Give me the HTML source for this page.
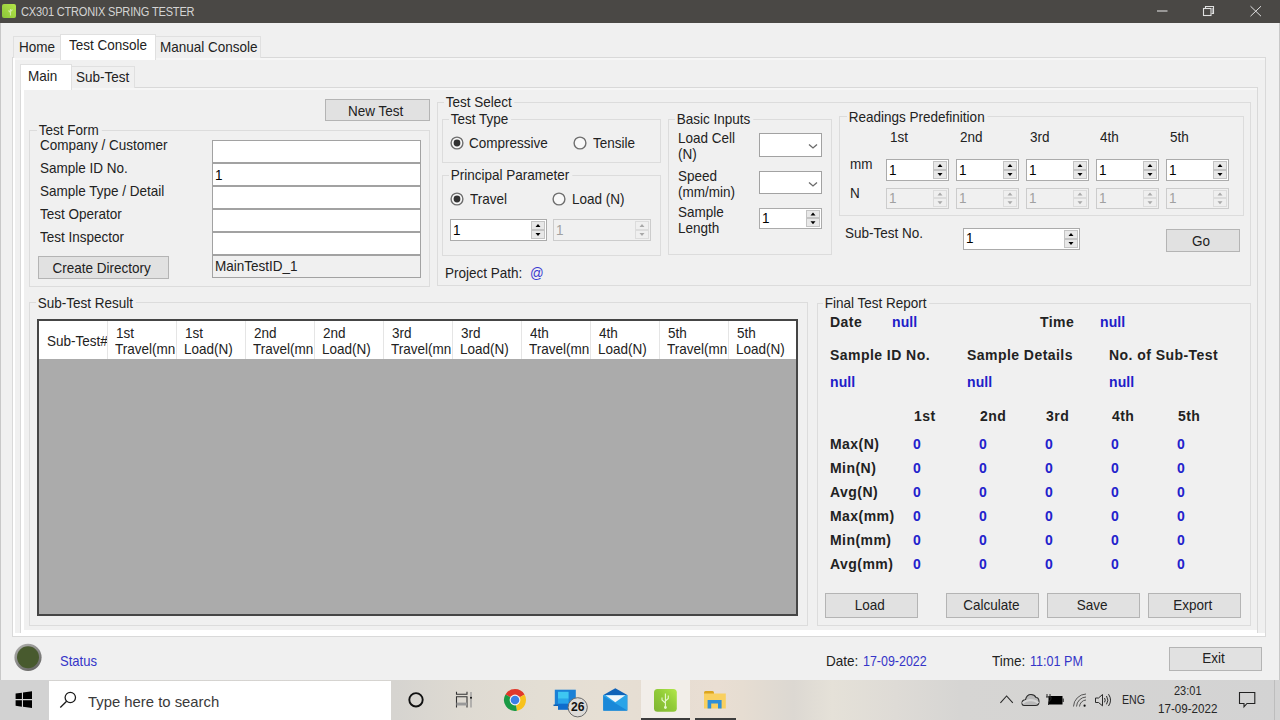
<!DOCTYPE html><html><head><meta charset="utf-8"><style>
html,body{margin:0;padding:0;width:1280px;height:720px;overflow:hidden;background:#f0f0f0;position:relative;font-family:"Liberation Sans",sans-serif}
.t{position:absolute;white-space:pre}
.b{position:absolute}
.grp{border:1px solid #dcdcdc;box-sizing:border-box}
.btn{background:#e1e1e1;border:1px solid #b4b4b4;box-sizing:border-box;text-align:center;color:#222222;font-family:"Liberation Sans",sans-serif}
</style></head><body>

<div class="b" style="left:0px;top:0px;width:1280px;height:23px;background:#4a4845"></div>
<svg class="b" style="left:2px;top:4px" width="15" height="15"><defs><linearGradient id="tg" x1="0" y1="1" x2="1" y2="0"><stop offset="0" stop-color="#8cc43a"/><stop offset="1" stop-color="#b4e648"/></linearGradient></defs><rect x="0" y="0" width="14" height="14" rx="2" fill="url(#tg)"/><path d="M8.5 11.5 V5 M8.5 8.5 L6.5 6.5 M8.5 7.5 L10.5 5.5" stroke="#cfeaa0" stroke-width="1.1" fill="none"/></svg>
<div class="t" style="left:21px;top:5.94px;font-size:12px;line-height:13.8px;color:#d4d4d4;font-weight:400;font-family:'Liberation Sans',sans-serif;letter-spacing:-0.2px;transform:scaleX(0.92);transform-origin:0 0;">CX301 CTRONIX SPRING TESTER</div>
<svg class="b" style="left:1150px;top:0" width="130" height="23"><path d="M7 11 H17.5" stroke="#cfcfcf" stroke-width="1.2"/><rect x="53.5" y="8.5" width="7.5" height="7" fill="none" stroke="#e0e0e0" stroke-width="1.1"/><rect x="61.5" y="8" width="1.8" height="6" fill="#9a9a9a"/><path d="M55.5 8.5 V6.5 H63.5 V13.5 H61.5" fill="none" stroke="#e0e0e0" stroke-width="1.1"/><path d="M100.5 6.2 L111 16.2 M111 6.2 L100.5 16.2" stroke="#e0e0e0" stroke-width="1"/></svg>
<div class="b" style="left:0px;top:23px;width:1px;height:657px;background:#c8c8c8"></div>
<div class="b" style="left:1279px;top:23px;width:1px;height:657px;background:#c8c8c8"></div>
<div class="b" style="left:12px;top:57px;width:1254px;height:580px;border:1px solid #d9d9d9;background:#f0f0f0;box-sizing:border-box"></div>
<div class="b" style="left:13px;top:58px;width:2px;height:577px;background:#fff"></div>
<div class="b" style="left:15px;top:58px;width:1250px;height:2px;background:#f6f6f6"></div>
<div class="b" style="left:13px;top:633px;width:1252px;height:3px;background:#fff"></div>
<div class="b" style="left:13px;top:36px;width:48px;height:22px;background:#f0f0f0;border:1px solid #e0e0e0;border-bottom:none;box-sizing:border-box"></div>
<div class="b" style="left:155px;top:36px;width:106px;height:22px;background:#f0f0f0;border:1px solid #e0e0e0;border-bottom:none;box-sizing:border-box"></div>
<div class="b" style="left:60px;top:34px;width:96px;height:26px;background:#fff;border:1px solid #e0e0e0;border-bottom:none;box-sizing:border-box"></div>
<div class="t" style="left:19px;top:38.18px;font-size:15px;line-height:17.25px;color:#222222;font-weight:400;font-family:'Liberation Sans',sans-serif;transform:scaleX(0.9);transform-origin:0 0;">Home</div>
<div class="t" style="left:69px;top:36.18px;font-size:15px;line-height:17.25px;color:#222222;font-weight:400;font-family:'Liberation Sans',sans-serif;transform:scaleX(0.9);transform-origin:0 0;">Test Console</div>
<div class="t" style="left:160px;top:38.18px;font-size:15px;line-height:17.25px;color:#222222;font-weight:400;font-family:'Liberation Sans',sans-serif;transform:scaleX(0.9);transform-origin:0 0;">Manual Console</div>
<div class="b" style="left:20px;top:87px;width:1px;height:546px;background:#d9d9d9"></div>
<div class="b" style="left:20px;top:87px;width:1238px;height:1px;background:#d9d9d9"></div>
<div class="b" style="left:1257px;top:87px;width:1px;height:546px;background:#d9d9d9"></div>
<div class="b" style="left:21px;top:88px;width:3px;height:545px;background:#fff"></div>
<div class="b" style="left:24px;top:88px;width:1233px;height:2px;background:#f6f6f6"></div>
<div class="b" style="left:21px;top:630px;width:1236px;height:3px;background:#fff"></div>
<div class="b" style="left:71px;top:66px;width:64px;height:22px;background:#f0f0f0;border:1px solid #e0e0e0;border-bottom:none;box-sizing:border-box"></div>
<div class="b" style="left:20px;top:64px;width:52px;height:26px;background:#fff;border:1px solid #e0e0e0;border-bottom:none;box-sizing:border-box"></div>
<div class="t" style="left:28px;top:66.68px;font-size:15px;line-height:17.25px;color:#222222;font-weight:400;font-family:'Liberation Sans',sans-serif;transform:scaleX(0.9);transform-origin:0 0;">Main</div>
<div class="t" style="left:76px;top:68.18px;font-size:15px;line-height:17.25px;color:#222222;font-weight:400;font-family:'Liberation Sans',sans-serif;transform:scaleX(0.9);transform-origin:0 0;">Sub-Test</div>
<div class="b btn" style="left:325px;top:99px;width:105px;height:22px;"></div>
<div class="t" style="left:323.5px;top:101.68px;width:105px;text-align:center;font-size:15px;line-height:17.25px;color:#222222"><span style="display:inline-block;transform:scaleX(0.9)">New Test</span></div>
<div class="b grp" style="left:29px;top:130px;width:401px;height:157px;"></div>
<div class="t" style="left:37px;top:121.18px;font-size:15px;line-height:17.25px;padding:0 3px 0 2px;background:#f0f0f0;color:#222222;transform:scaleX(0.9);transform-origin:0 0">Test Form</div>
<div class="t" style="left:40px;top:136.18px;font-size:15px;line-height:17.25px;color:#222222;font-weight:400;font-family:'Liberation Sans',sans-serif;transform:scaleX(0.9);transform-origin:0 0;">Company / Customer</div>
<div class="t" style="left:40px;top:159.18px;font-size:15px;line-height:17.25px;color:#222222;font-weight:400;font-family:'Liberation Sans',sans-serif;transform:scaleX(0.9);transform-origin:0 0;">Sample ID No.</div>
<div class="t" style="left:40px;top:182.18px;font-size:15px;line-height:17.25px;color:#222222;font-weight:400;font-family:'Liberation Sans',sans-serif;transform:scaleX(0.9);transform-origin:0 0;">Sample Type / Detail</div>
<div class="t" style="left:40px;top:205.18px;font-size:15px;line-height:17.25px;color:#222222;font-weight:400;font-family:'Liberation Sans',sans-serif;transform:scaleX(0.9);transform-origin:0 0;">Test Operator</div>
<div class="t" style="left:40px;top:228.18px;font-size:15px;line-height:17.25px;color:#222222;font-weight:400;font-family:'Liberation Sans',sans-serif;transform:scaleX(0.9);transform-origin:0 0;">Test Inspector</div>
<div class="b" style="left:212px;top:140px;width:209px;height:23px;background:#fff;border:1px solid #a2a2a2;box-sizing:border-box"></div>
<div class="b" style="left:212px;top:163px;width:209px;height:23px;background:#fff;border:1px solid #a2a2a2;box-sizing:border-box"></div>
<div class="t" style="left:215px;top:166.18px;font-size:15px;line-height:17.25px;color:#000;font-weight:400;font-family:'Liberation Sans',sans-serif;transform:scaleX(0.9);transform-origin:0 0;">1</div>
<div class="b" style="left:212px;top:186px;width:209px;height:23px;background:#fff;border:1px solid #a2a2a2;box-sizing:border-box"></div>
<div class="b" style="left:212px;top:209px;width:209px;height:23px;background:#fff;border:1px solid #a2a2a2;box-sizing:border-box"></div>
<div class="b" style="left:212px;top:232px;width:209px;height:23px;background:#fff;border:1px solid #a2a2a2;box-sizing:border-box"></div>
<div class="b btn" style="left:38px;top:256px;width:131px;height:23px;"></div>
<div class="t" style="left:36.5px;top:259.18px;width:131px;text-align:center;font-size:15px;line-height:17.25px;color:#222222"><span style="display:inline-block;transform:scaleX(0.9)">Create Directory</span></div>
<div class="b" style="left:212px;top:255px;width:209px;height:23px;background:#f0f0f0;border:1px solid #a2a2a2;box-sizing:border-box"></div>
<div class="t" style="left:215px;top:257.18px;font-size:15px;line-height:17.25px;color:#222222;font-weight:400;font-family:'Liberation Sans',sans-serif;transform:scaleX(0.9);transform-origin:0 0;">MainTestID_1</div>
<div class="b grp" style="left:437px;top:102px;width:814px;height:184px;"></div>
<div class="t" style="left:444px;top:93.18px;font-size:15px;line-height:17.25px;padding:0 3px 0 2px;background:#f0f0f0;color:#222222;transform:scaleX(0.9);transform-origin:0 0">Test Select</div>
<div class="b grp" style="left:442px;top:119px;width:219px;height:44px;"></div>
<div class="t" style="left:449px;top:110.18px;font-size:15px;line-height:17.25px;padding:0 3px 0 2px;background:#f0f0f0;color:#222222;transform:scaleX(0.9);transform-origin:0 0">Test Type</div>
<svg class="b" style="left:449.5px;top:135.75px" width="14" height="14"><circle cx="7" cy="7" r="5.9" fill="#f8f8f8" stroke="#6e6e6e" stroke-width="1.4"/><circle cx="7" cy="7" r="3.4" fill="#333"/></svg>
<div class="t" style="left:469px;top:134.18px;font-size:15px;line-height:17.25px;color:#222222;font-weight:400;font-family:'Liberation Sans',sans-serif;transform:scaleX(0.9);transform-origin:0 0;">Compressive</div>
<svg class="b" style="left:572.5px;top:135.75px" width="14" height="14"><circle cx="7" cy="7" r="5.9" fill="#f8f8f8" stroke="#6e6e6e" stroke-width="1.4"/></svg>
<div class="t" style="left:593px;top:134.18px;font-size:15px;line-height:17.25px;color:#222222;font-weight:400;font-family:'Liberation Sans',sans-serif;transform:scaleX(0.9);transform-origin:0 0;">Tensile</div>
<div class="b grp" style="left:442px;top:175px;width:219px;height:81px;"></div>
<div class="t" style="left:449px;top:166.18px;font-size:15px;line-height:17.25px;padding:0 3px 0 2px;background:#f0f0f0;color:#222222;transform:scaleX(0.9);transform-origin:0 0">Principal Parameter</div>
<svg class="b" style="left:449.5px;top:191.75px" width="14" height="14"><circle cx="7" cy="7" r="5.9" fill="#f8f8f8" stroke="#6e6e6e" stroke-width="1.4"/><circle cx="7" cy="7" r="3.4" fill="#333"/></svg>
<div class="t" style="left:470px;top:190.18px;font-size:15px;line-height:17.25px;color:#222222;font-weight:400;font-family:'Liberation Sans',sans-serif;transform:scaleX(0.9);transform-origin:0 0;">Travel</div>
<svg class="b" style="left:551.5px;top:191.75px" width="14" height="14"><circle cx="7" cy="7" r="5.9" fill="#f8f8f8" stroke="#6e6e6e" stroke-width="1.4"/></svg>
<div class="t" style="left:572px;top:190.18px;font-size:15px;line-height:17.25px;color:#222222;font-weight:400;font-family:'Liberation Sans',sans-serif;transform:scaleX(0.9);transform-origin:0 0;">Load (N)</div>
<div class="b" style="left:450px;top:219px;width:97px;height:22px;background:#fff;border:1px solid #ababab;box-sizing:border-box"></div>
<div class="b" style="left:531px;top:221px;width:14px;height:9px;background:#e8e8e8;border:1px solid #c4c4c4;box-sizing:border-box"></div>
<div class="b" style="left:531px;top:230px;width:14px;height:9px;background:#e8e8e8;border:1px solid #c4c4c4;box-sizing:border-box"></div>
<svg class="b" style="left:531px;top:219px" width="14" height="22"><path d="M4.5 8.0 L7 5.0 L9.5 8.0Z M4.5 14.0 L7 17.0 L9.5 14.0Z" fill="#000"/></svg>
<div class="t" style="left:453px;top:220.88px;font-size:15px;line-height:17.25px;color:#000;font-weight:400;font-family:'Liberation Sans',sans-serif;transform:scaleX(0.9);transform-origin:0 0;">1</div>
<div class="b" style="left:553px;top:219px;width:98px;height:22px;background:#f0f0f0;border:1px solid #cccccc;box-sizing:border-box"></div>
<div class="b" style="left:635px;top:221px;width:14px;height:9px;background:#efefef;border:1px solid #dcdcdc;box-sizing:border-box"></div>
<div class="b" style="left:635px;top:230px;width:14px;height:9px;background:#efefef;border:1px solid #dcdcdc;box-sizing:border-box"></div>
<svg class="b" style="left:635px;top:219px" width="14" height="22"><path d="M4.5 8.0 L7 5.0 L9.5 8.0Z M4.5 14.0 L7 17.0 L9.5 14.0Z" fill="#a8a8a8"/></svg>
<div class="t" style="left:556px;top:220.88px;font-size:15px;line-height:17.25px;color:#a0a0a0;font-weight:400;font-family:'Liberation Sans',sans-serif;transform:scaleX(0.9);transform-origin:0 0;">1</div>
<div class="t" style="left:445px;top:264.18px;font-size:15px;line-height:17.25px;color:#222222;font-weight:400;font-family:'Liberation Sans',sans-serif;transform:scaleX(0.9);transform-origin:0 0;">Project Path:</div>
<div class="t" style="left:530px;top:264.18px;font-size:15px;line-height:17.25px;color:#3a3ad0;font-weight:400;font-family:'Liberation Sans',sans-serif;transform:scaleX(0.9);transform-origin:0 0;">@</div>
<div class="b grp" style="left:668px;top:119px;width:164px;height:136px;"></div>
<div class="t" style="left:675px;top:110.18px;font-size:15px;line-height:17.25px;padding:0 3px 0 2px;background:#f0f0f0;color:#222222;transform:scaleX(0.9);transform-origin:0 0">Basic Inputs</div>
<div class="t" style="left:678px;top:129.18px;font-size:15px;line-height:17.25px;color:#222222;font-weight:400;font-family:'Liberation Sans',sans-serif;transform:scaleX(0.9);transform-origin:0 0;">Load Cell</div>
<div class="t" style="left:678px;top:145.18px;font-size:15px;line-height:17.25px;color:#222222;font-weight:400;font-family:'Liberation Sans',sans-serif;transform:scaleX(0.9);transform-origin:0 0;">(N)</div>
<div class="b" style="left:759px;top:133px;width:63px;height:24px;background:#fff;border:1px solid #a2a2a2;box-sizing:border-box"></div>
<svg class="b" style="left:804px;top:141.0px" width="16" height="10"><path d="M5 3.4 L9 7 L13 3.4" fill="none" stroke="#6a6a6a" stroke-width="1.3"/></svg>
<div class="t" style="left:678px;top:167.18px;font-size:15px;line-height:17.25px;color:#222222;font-weight:400;font-family:'Liberation Sans',sans-serif;transform:scaleX(0.9);transform-origin:0 0;">Speed</div>
<div class="t" style="left:678px;top:183.18px;font-size:15px;line-height:17.25px;color:#222222;font-weight:400;font-family:'Liberation Sans',sans-serif;transform:scaleX(0.9);transform-origin:0 0;">(mm/min)</div>
<div class="b" style="left:759px;top:171px;width:63px;height:23px;background:#fff;border:1px solid #a2a2a2;box-sizing:border-box"></div>
<svg class="b" style="left:804px;top:178.5px" width="16" height="10"><path d="M5 3.4 L9 7 L13 3.4" fill="none" stroke="#6a6a6a" stroke-width="1.3"/></svg>
<div class="t" style="left:678px;top:203.18px;font-size:15px;line-height:17.25px;color:#222222;font-weight:400;font-family:'Liberation Sans',sans-serif;transform:scaleX(0.9);transform-origin:0 0;">Sample</div>
<div class="t" style="left:678px;top:219.18px;font-size:15px;line-height:17.25px;color:#222222;font-weight:400;font-family:'Liberation Sans',sans-serif;transform:scaleX(0.9);transform-origin:0 0;">Length</div>
<div class="b" style="left:759px;top:207.5px;width:63px;height:21.5px;background:#fff;border:1px solid #ababab;box-sizing:border-box"></div>
<div class="b" style="left:806px;top:209.5px;width:14px;height:8.0px;background:#e8e8e8;border:1px solid #c4c4c4;box-sizing:border-box"></div>
<div class="b" style="left:806px;top:217.5px;width:14px;height:9.5px;background:#e8e8e8;border:1px solid #c4c4c4;box-sizing:border-box"></div>
<svg class="b" style="left:806px;top:207.5px" width="14" height="21.5"><path d="M4.5 7.5 L7 4.5 L9.5 7.5Z M4.5 13.2 L7 16.2 L9.5 13.2Z" fill="#000"/></svg>
<div class="t" style="left:762px;top:209.18px;font-size:15px;line-height:17.25px;color:#000;font-weight:400;font-family:'Liberation Sans',sans-serif;transform:scaleX(0.9);transform-origin:0 0;">1</div>
<div class="b grp" style="left:839px;top:116px;width:405px;height:100px;"></div>
<div class="t" style="left:847px;top:108.18px;font-size:15px;line-height:17.25px;padding:0 3px 0 2px;background:#f0f0f0;color:#222222;transform:scaleX(0.9);transform-origin:0 0">Readings Predefinition</div>
<div class="t" style="left:890px;top:127.68px;font-size:15px;line-height:17.25px;color:#222222;font-weight:400;font-family:'Liberation Sans',sans-serif;transform:scaleX(0.9);transform-origin:0 0;">1st</div>
<div class="b" style="left:886px;top:159px;width:63px;height:22px;background:#fff;border:1px solid #ababab;box-sizing:border-box"></div>
<div class="b" style="left:933px;top:161px;width:14px;height:9px;background:#e8e8e8;border:1px solid #c4c4c4;box-sizing:border-box"></div>
<div class="b" style="left:933px;top:170px;width:14px;height:9px;background:#e8e8e8;border:1px solid #c4c4c4;box-sizing:border-box"></div>
<svg class="b" style="left:933px;top:159px" width="14" height="22"><path d="M4.5 8.0 L7 5.0 L9.5 8.0Z M4.5 14.0 L7 17.0 L9.5 14.0Z" fill="#000"/></svg>
<div class="t" style="left:889px;top:160.68px;font-size:15px;line-height:17.25px;color:#000;font-weight:400;font-family:'Liberation Sans',sans-serif;transform:scaleX(0.9);transform-origin:0 0;">1</div>
<div class="b" style="left:886px;top:187.5px;width:63px;height:21.5px;background:#f0f0f0;border:1px solid #cccccc;box-sizing:border-box"></div>
<div class="b" style="left:933px;top:189.5px;width:14px;height:8.0px;background:#efefef;border:1px solid #dcdcdc;box-sizing:border-box"></div>
<div class="b" style="left:933px;top:197.5px;width:14px;height:9.5px;background:#efefef;border:1px solid #dcdcdc;box-sizing:border-box"></div>
<svg class="b" style="left:933px;top:187.5px" width="14" height="21.5"><path d="M4.5 7.5 L7 4.5 L9.5 7.5Z M4.5 13.2 L7 16.2 L9.5 13.2Z" fill="#a8a8a8"/></svg>
<div class="t" style="left:889px;top:188.68px;font-size:15px;line-height:17.25px;color:#a0a0a0;font-weight:400;font-family:'Liberation Sans',sans-serif;transform:scaleX(0.9);transform-origin:0 0;">1</div>
<div class="t" style="left:960px;top:127.68px;font-size:15px;line-height:17.25px;color:#222222;font-weight:400;font-family:'Liberation Sans',sans-serif;transform:scaleX(0.9);transform-origin:0 0;">2nd</div>
<div class="b" style="left:956px;top:159px;width:63px;height:22px;background:#fff;border:1px solid #ababab;box-sizing:border-box"></div>
<div class="b" style="left:1003px;top:161px;width:14px;height:9px;background:#e8e8e8;border:1px solid #c4c4c4;box-sizing:border-box"></div>
<div class="b" style="left:1003px;top:170px;width:14px;height:9px;background:#e8e8e8;border:1px solid #c4c4c4;box-sizing:border-box"></div>
<svg class="b" style="left:1003px;top:159px" width="14" height="22"><path d="M4.5 8.0 L7 5.0 L9.5 8.0Z M4.5 14.0 L7 17.0 L9.5 14.0Z" fill="#000"/></svg>
<div class="t" style="left:959px;top:160.68px;font-size:15px;line-height:17.25px;color:#000;font-weight:400;font-family:'Liberation Sans',sans-serif;transform:scaleX(0.9);transform-origin:0 0;">1</div>
<div class="b" style="left:956px;top:187.5px;width:63px;height:21.5px;background:#f0f0f0;border:1px solid #cccccc;box-sizing:border-box"></div>
<div class="b" style="left:1003px;top:189.5px;width:14px;height:8.0px;background:#efefef;border:1px solid #dcdcdc;box-sizing:border-box"></div>
<div class="b" style="left:1003px;top:197.5px;width:14px;height:9.5px;background:#efefef;border:1px solid #dcdcdc;box-sizing:border-box"></div>
<svg class="b" style="left:1003px;top:187.5px" width="14" height="21.5"><path d="M4.5 7.5 L7 4.5 L9.5 7.5Z M4.5 13.2 L7 16.2 L9.5 13.2Z" fill="#a8a8a8"/></svg>
<div class="t" style="left:959px;top:188.68px;font-size:15px;line-height:17.25px;color:#a0a0a0;font-weight:400;font-family:'Liberation Sans',sans-serif;transform:scaleX(0.9);transform-origin:0 0;">1</div>
<div class="t" style="left:1030px;top:127.68px;font-size:15px;line-height:17.25px;color:#222222;font-weight:400;font-family:'Liberation Sans',sans-serif;transform:scaleX(0.9);transform-origin:0 0;">3rd</div>
<div class="b" style="left:1026px;top:159px;width:63px;height:22px;background:#fff;border:1px solid #ababab;box-sizing:border-box"></div>
<div class="b" style="left:1073px;top:161px;width:14px;height:9px;background:#e8e8e8;border:1px solid #c4c4c4;box-sizing:border-box"></div>
<div class="b" style="left:1073px;top:170px;width:14px;height:9px;background:#e8e8e8;border:1px solid #c4c4c4;box-sizing:border-box"></div>
<svg class="b" style="left:1073px;top:159px" width="14" height="22"><path d="M4.5 8.0 L7 5.0 L9.5 8.0Z M4.5 14.0 L7 17.0 L9.5 14.0Z" fill="#000"/></svg>
<div class="t" style="left:1029px;top:160.68px;font-size:15px;line-height:17.25px;color:#000;font-weight:400;font-family:'Liberation Sans',sans-serif;transform:scaleX(0.9);transform-origin:0 0;">1</div>
<div class="b" style="left:1026px;top:187.5px;width:63px;height:21.5px;background:#f0f0f0;border:1px solid #cccccc;box-sizing:border-box"></div>
<div class="b" style="left:1073px;top:189.5px;width:14px;height:8.0px;background:#efefef;border:1px solid #dcdcdc;box-sizing:border-box"></div>
<div class="b" style="left:1073px;top:197.5px;width:14px;height:9.5px;background:#efefef;border:1px solid #dcdcdc;box-sizing:border-box"></div>
<svg class="b" style="left:1073px;top:187.5px" width="14" height="21.5"><path d="M4.5 7.5 L7 4.5 L9.5 7.5Z M4.5 13.2 L7 16.2 L9.5 13.2Z" fill="#a8a8a8"/></svg>
<div class="t" style="left:1029px;top:188.68px;font-size:15px;line-height:17.25px;color:#a0a0a0;font-weight:400;font-family:'Liberation Sans',sans-serif;transform:scaleX(0.9);transform-origin:0 0;">1</div>
<div class="t" style="left:1100px;top:127.68px;font-size:15px;line-height:17.25px;color:#222222;font-weight:400;font-family:'Liberation Sans',sans-serif;transform:scaleX(0.9);transform-origin:0 0;">4th</div>
<div class="b" style="left:1096px;top:159px;width:63px;height:22px;background:#fff;border:1px solid #ababab;box-sizing:border-box"></div>
<div class="b" style="left:1143px;top:161px;width:14px;height:9px;background:#e8e8e8;border:1px solid #c4c4c4;box-sizing:border-box"></div>
<div class="b" style="left:1143px;top:170px;width:14px;height:9px;background:#e8e8e8;border:1px solid #c4c4c4;box-sizing:border-box"></div>
<svg class="b" style="left:1143px;top:159px" width="14" height="22"><path d="M4.5 8.0 L7 5.0 L9.5 8.0Z M4.5 14.0 L7 17.0 L9.5 14.0Z" fill="#000"/></svg>
<div class="t" style="left:1099px;top:160.68px;font-size:15px;line-height:17.25px;color:#000;font-weight:400;font-family:'Liberation Sans',sans-serif;transform:scaleX(0.9);transform-origin:0 0;">1</div>
<div class="b" style="left:1096px;top:187.5px;width:63px;height:21.5px;background:#f0f0f0;border:1px solid #cccccc;box-sizing:border-box"></div>
<div class="b" style="left:1143px;top:189.5px;width:14px;height:8.0px;background:#efefef;border:1px solid #dcdcdc;box-sizing:border-box"></div>
<div class="b" style="left:1143px;top:197.5px;width:14px;height:9.5px;background:#efefef;border:1px solid #dcdcdc;box-sizing:border-box"></div>
<svg class="b" style="left:1143px;top:187.5px" width="14" height="21.5"><path d="M4.5 7.5 L7 4.5 L9.5 7.5Z M4.5 13.2 L7 16.2 L9.5 13.2Z" fill="#a8a8a8"/></svg>
<div class="t" style="left:1099px;top:188.68px;font-size:15px;line-height:17.25px;color:#a0a0a0;font-weight:400;font-family:'Liberation Sans',sans-serif;transform:scaleX(0.9);transform-origin:0 0;">1</div>
<div class="t" style="left:1170px;top:127.68px;font-size:15px;line-height:17.25px;color:#222222;font-weight:400;font-family:'Liberation Sans',sans-serif;transform:scaleX(0.9);transform-origin:0 0;">5th</div>
<div class="b" style="left:1166px;top:159px;width:63px;height:22px;background:#fff;border:1px solid #ababab;box-sizing:border-box"></div>
<div class="b" style="left:1213px;top:161px;width:14px;height:9px;background:#e8e8e8;border:1px solid #c4c4c4;box-sizing:border-box"></div>
<div class="b" style="left:1213px;top:170px;width:14px;height:9px;background:#e8e8e8;border:1px solid #c4c4c4;box-sizing:border-box"></div>
<svg class="b" style="left:1213px;top:159px" width="14" height="22"><path d="M4.5 8.0 L7 5.0 L9.5 8.0Z M4.5 14.0 L7 17.0 L9.5 14.0Z" fill="#000"/></svg>
<div class="t" style="left:1169px;top:160.68px;font-size:15px;line-height:17.25px;color:#000;font-weight:400;font-family:'Liberation Sans',sans-serif;transform:scaleX(0.9);transform-origin:0 0;">1</div>
<div class="b" style="left:1166px;top:187.5px;width:63px;height:21.5px;background:#f0f0f0;border:1px solid #cccccc;box-sizing:border-box"></div>
<div class="b" style="left:1213px;top:189.5px;width:14px;height:8.0px;background:#efefef;border:1px solid #dcdcdc;box-sizing:border-box"></div>
<div class="b" style="left:1213px;top:197.5px;width:14px;height:9.5px;background:#efefef;border:1px solid #dcdcdc;box-sizing:border-box"></div>
<svg class="b" style="left:1213px;top:187.5px" width="14" height="21.5"><path d="M4.5 7.5 L7 4.5 L9.5 7.5Z M4.5 13.2 L7 16.2 L9.5 13.2Z" fill="#a8a8a8"/></svg>
<div class="t" style="left:1169px;top:188.68px;font-size:15px;line-height:17.25px;color:#a0a0a0;font-weight:400;font-family:'Liberation Sans',sans-serif;transform:scaleX(0.9);transform-origin:0 0;">1</div>
<div class="t" style="left:850px;top:155.18px;font-size:15px;line-height:17.25px;color:#222222;font-weight:400;font-family:'Liberation Sans',sans-serif;transform:scaleX(0.9);transform-origin:0 0;">mm</div>
<div class="t" style="left:850px;top:184.18px;font-size:15px;line-height:17.25px;color:#222222;font-weight:400;font-family:'Liberation Sans',sans-serif;transform:scaleX(0.9);transform-origin:0 0;">N</div>
<div class="t" style="left:845px;top:224.48px;font-size:15px;line-height:17.25px;color:#222222;font-weight:400;font-family:'Liberation Sans',sans-serif;transform:scaleX(0.9);transform-origin:0 0;">Sub-Test No.</div>
<div class="b" style="left:963px;top:228px;width:117px;height:22px;background:#fff;border:1px solid #ababab;box-sizing:border-box"></div>
<div class="b" style="left:1064px;top:230px;width:14px;height:9px;background:#e8e8e8;border:1px solid #c4c4c4;box-sizing:border-box"></div>
<div class="b" style="left:1064px;top:239px;width:14px;height:9px;background:#e8e8e8;border:1px solid #c4c4c4;box-sizing:border-box"></div>
<svg class="b" style="left:1064px;top:228px" width="14" height="22"><path d="M4.5 8.0 L7 5.0 L9.5 8.0Z M4.5 14.0 L7 17.0 L9.5 14.0Z" fill="#000"/></svg>
<div class="t" style="left:966px;top:229.48px;font-size:15px;line-height:17.25px;color:#000;font-weight:400;font-family:'Liberation Sans',sans-serif;transform:scaleX(0.9);transform-origin:0 0;">1</div>
<div class="b btn" style="left:1166px;top:229px;width:74px;height:23px;"></div>
<div class="t" style="left:1164.5px;top:232.18px;width:74px;text-align:center;font-size:15px;line-height:17.25px;color:#222222"><span style="display:inline-block;transform:scaleX(0.9)">Go</span></div>
<div class="b grp" style="left:29px;top:302px;width:779px;height:324px;"></div>
<div class="t" style="left:36px;top:293.68px;font-size:15px;line-height:17.25px;padding:0 3px 0 2px;background:#f0f0f0;color:#222222;transform:scaleX(0.9);transform-origin:0 0">Sub-Test Result</div>
<div class="b" style="left:37px;top:319px;width:761px;height:297px;border:2px solid #454545;background:#ababab;box-sizing:border-box"></div>
<div class="b" style="left:39px;top:321px;width:757px;height:38px;background:#fff"></div>
<div class="b" style="left:39px;top:321px;width:68px;height:38px;overflow:hidden">
<div class="t" style="left:8px;top:10.68px;font-size:15px;line-height:17.25px;color:#222222;font-weight:400;font-family:'Liberation Sans',sans-serif;transform:scaleX(0.9);transform-origin:0 0;">Sub-Test#</div>
</div>
<div class="b" style="left:107px;top:321px;width:1px;height:38px;background:#e5e5e5"></div>
<div class="b" style="left:107px;top:321px;width:68px;height:38px;overflow:hidden">
<div class="t" style="left:9px;top:2.68px;font-size:15px;line-height:17.25px;color:#222222;font-weight:400;font-family:'Liberation Sans',sans-serif;transform:scaleX(0.9);transform-origin:0 0;">1st</div>
<div class="t" style="left:8px;top:18.68px;font-size:15px;line-height:17.25px;color:#222222;font-weight:400;font-family:'Liberation Sans',sans-serif;transform:scaleX(0.9);transform-origin:0 0;">Travel(mn</div>
</div>
<div class="b" style="left:176px;top:321px;width:1px;height:38px;background:#e5e5e5"></div>
<div class="b" style="left:176px;top:321px;width:68px;height:38px;overflow:hidden">
<div class="t" style="left:9px;top:2.68px;font-size:15px;line-height:17.25px;color:#222222;font-weight:400;font-family:'Liberation Sans',sans-serif;transform:scaleX(0.9);transform-origin:0 0;">1st</div>
<div class="t" style="left:8px;top:18.68px;font-size:15px;line-height:17.25px;color:#222222;font-weight:400;font-family:'Liberation Sans',sans-serif;transform:scaleX(0.9);transform-origin:0 0;">Load(N)</div>
</div>
<div class="b" style="left:245px;top:321px;width:1px;height:38px;background:#e5e5e5"></div>
<div class="b" style="left:245px;top:321px;width:68px;height:38px;overflow:hidden">
<div class="t" style="left:9px;top:2.68px;font-size:15px;line-height:17.25px;color:#222222;font-weight:400;font-family:'Liberation Sans',sans-serif;transform:scaleX(0.9);transform-origin:0 0;">2nd</div>
<div class="t" style="left:8px;top:18.68px;font-size:15px;line-height:17.25px;color:#222222;font-weight:400;font-family:'Liberation Sans',sans-serif;transform:scaleX(0.9);transform-origin:0 0;">Travel(mn</div>
</div>
<div class="b" style="left:314px;top:321px;width:1px;height:38px;background:#e5e5e5"></div>
<div class="b" style="left:314px;top:321px;width:68px;height:38px;overflow:hidden">
<div class="t" style="left:9px;top:2.68px;font-size:15px;line-height:17.25px;color:#222222;font-weight:400;font-family:'Liberation Sans',sans-serif;transform:scaleX(0.9);transform-origin:0 0;">2nd</div>
<div class="t" style="left:8px;top:18.68px;font-size:15px;line-height:17.25px;color:#222222;font-weight:400;font-family:'Liberation Sans',sans-serif;transform:scaleX(0.9);transform-origin:0 0;">Load(N)</div>
</div>
<div class="b" style="left:383px;top:321px;width:1px;height:38px;background:#e5e5e5"></div>
<div class="b" style="left:383px;top:321px;width:68px;height:38px;overflow:hidden">
<div class="t" style="left:9px;top:2.68px;font-size:15px;line-height:17.25px;color:#222222;font-weight:400;font-family:'Liberation Sans',sans-serif;transform:scaleX(0.9);transform-origin:0 0;">3rd</div>
<div class="t" style="left:8px;top:18.68px;font-size:15px;line-height:17.25px;color:#222222;font-weight:400;font-family:'Liberation Sans',sans-serif;transform:scaleX(0.9);transform-origin:0 0;">Travel(mn</div>
</div>
<div class="b" style="left:452px;top:321px;width:1px;height:38px;background:#e5e5e5"></div>
<div class="b" style="left:452px;top:321px;width:68px;height:38px;overflow:hidden">
<div class="t" style="left:9px;top:2.68px;font-size:15px;line-height:17.25px;color:#222222;font-weight:400;font-family:'Liberation Sans',sans-serif;transform:scaleX(0.9);transform-origin:0 0;">3rd</div>
<div class="t" style="left:8px;top:18.68px;font-size:15px;line-height:17.25px;color:#222222;font-weight:400;font-family:'Liberation Sans',sans-serif;transform:scaleX(0.9);transform-origin:0 0;">Load(N)</div>
</div>
<div class="b" style="left:521px;top:321px;width:1px;height:38px;background:#e5e5e5"></div>
<div class="b" style="left:521px;top:321px;width:68px;height:38px;overflow:hidden">
<div class="t" style="left:9px;top:2.68px;font-size:15px;line-height:17.25px;color:#222222;font-weight:400;font-family:'Liberation Sans',sans-serif;transform:scaleX(0.9);transform-origin:0 0;">4th</div>
<div class="t" style="left:8px;top:18.68px;font-size:15px;line-height:17.25px;color:#222222;font-weight:400;font-family:'Liberation Sans',sans-serif;transform:scaleX(0.9);transform-origin:0 0;">Travel(mn</div>
</div>
<div class="b" style="left:590px;top:321px;width:1px;height:38px;background:#e5e5e5"></div>
<div class="b" style="left:590px;top:321px;width:68px;height:38px;overflow:hidden">
<div class="t" style="left:9px;top:2.68px;font-size:15px;line-height:17.25px;color:#222222;font-weight:400;font-family:'Liberation Sans',sans-serif;transform:scaleX(0.9);transform-origin:0 0;">4th</div>
<div class="t" style="left:8px;top:18.68px;font-size:15px;line-height:17.25px;color:#222222;font-weight:400;font-family:'Liberation Sans',sans-serif;transform:scaleX(0.9);transform-origin:0 0;">Load(N)</div>
</div>
<div class="b" style="left:659px;top:321px;width:1px;height:38px;background:#e5e5e5"></div>
<div class="b" style="left:659px;top:321px;width:68px;height:38px;overflow:hidden">
<div class="t" style="left:9px;top:2.68px;font-size:15px;line-height:17.25px;color:#222222;font-weight:400;font-family:'Liberation Sans',sans-serif;transform:scaleX(0.9);transform-origin:0 0;">5th</div>
<div class="t" style="left:8px;top:18.68px;font-size:15px;line-height:17.25px;color:#222222;font-weight:400;font-family:'Liberation Sans',sans-serif;transform:scaleX(0.9);transform-origin:0 0;">Travel(mn</div>
</div>
<div class="b" style="left:728px;top:321px;width:1px;height:38px;background:#e5e5e5"></div>
<div class="b" style="left:728px;top:321px;width:68px;height:38px;overflow:hidden">
<div class="t" style="left:9px;top:2.68px;font-size:15px;line-height:17.25px;color:#222222;font-weight:400;font-family:'Liberation Sans',sans-serif;transform:scaleX(0.9);transform-origin:0 0;">5th</div>
<div class="t" style="left:8px;top:18.68px;font-size:15px;line-height:17.25px;color:#222222;font-weight:400;font-family:'Liberation Sans',sans-serif;transform:scaleX(0.9);transform-origin:0 0;">Load(N)</div>
</div>
<div class="b grp" style="left:817px;top:303px;width:434px;height:323px;"></div>
<div class="t" style="left:823px;top:293.68px;font-size:15px;line-height:17.25px;padding:0 3px 0 2px;background:#f0f0f0;color:#222222;transform:scaleX(0.9);transform-origin:0 0">Final Test Report</div>
<div class="t" style="left:830px;top:314.10px;font-size:14px;line-height:16.1px;color:#222222;font-weight:700;font-family:'Liberation Sans',sans-serif;letter-spacing:0.45px;">Date</div>
<div class="t" style="left:892px;top:314.10px;font-size:14px;line-height:16.1px;color:#2020c8;font-weight:700;font-family:'Liberation Sans',sans-serif;letter-spacing:0.1px;">null</div>
<div class="t" style="left:1040px;top:314.10px;font-size:14px;line-height:16.1px;color:#222222;font-weight:700;font-family:'Liberation Sans',sans-serif;letter-spacing:0.45px;">Time</div>
<div class="t" style="left:1100px;top:314.10px;font-size:14px;line-height:16.1px;color:#2020c8;font-weight:700;font-family:'Liberation Sans',sans-serif;letter-spacing:0.1px;">null</div>
<div class="t" style="left:830px;top:347.10px;font-size:14px;line-height:16.1px;color:#222222;font-weight:700;font-family:'Liberation Sans',sans-serif;letter-spacing:0.45px;">Sample ID No.</div>
<div class="t" style="left:967px;top:347.10px;font-size:14px;line-height:16.1px;color:#222222;font-weight:700;font-family:'Liberation Sans',sans-serif;letter-spacing:0.45px;">Sample Details</div>
<div class="t" style="left:1109px;top:347.10px;font-size:14px;line-height:16.1px;color:#222222;font-weight:700;font-family:'Liberation Sans',sans-serif;letter-spacing:0.45px;">No. of Sub-Test</div>
<div class="t" style="left:830px;top:374.10px;font-size:14px;line-height:16.1px;color:#2020c8;font-weight:700;font-family:'Liberation Sans',sans-serif;letter-spacing:0.1px;">null</div>
<div class="t" style="left:967px;top:374.10px;font-size:14px;line-height:16.1px;color:#2020c8;font-weight:700;font-family:'Liberation Sans',sans-serif;letter-spacing:0.1px;">null</div>
<div class="t" style="left:1109px;top:374.10px;font-size:14px;line-height:16.1px;color:#2020c8;font-weight:700;font-family:'Liberation Sans',sans-serif;letter-spacing:0.1px;">null</div>
<div class="t" style="left:914px;top:408.10px;font-size:14px;line-height:16.1px;color:#222222;font-weight:700;font-family:'Liberation Sans',sans-serif;letter-spacing:0.45px;">1st</div>
<div class="t" style="left:980px;top:408.10px;font-size:14px;line-height:16.1px;color:#222222;font-weight:700;font-family:'Liberation Sans',sans-serif;letter-spacing:0.45px;">2nd</div>
<div class="t" style="left:1046px;top:408.10px;font-size:14px;line-height:16.1px;color:#222222;font-weight:700;font-family:'Liberation Sans',sans-serif;letter-spacing:0.45px;">3rd</div>
<div class="t" style="left:1112px;top:408.10px;font-size:14px;line-height:16.1px;color:#222222;font-weight:700;font-family:'Liberation Sans',sans-serif;letter-spacing:0.45px;">4th</div>
<div class="t" style="left:1178px;top:408.10px;font-size:14px;line-height:16.1px;color:#222222;font-weight:700;font-family:'Liberation Sans',sans-serif;letter-spacing:0.45px;">5th</div>
<div class="t" style="left:830px;top:436.10px;font-size:14px;line-height:16.1px;color:#222222;font-weight:700;font-family:'Liberation Sans',sans-serif;letter-spacing:0.45px;">Max(N)</div>
<div class="t" style="left:913px;top:436.10px;font-size:14px;line-height:16.1px;color:#2222cc;font-weight:700;font-family:'Liberation Sans',sans-serif;letter-spacing:0.45px;">0</div>
<div class="t" style="left:979px;top:436.10px;font-size:14px;line-height:16.1px;color:#2222cc;font-weight:700;font-family:'Liberation Sans',sans-serif;letter-spacing:0.45px;">0</div>
<div class="t" style="left:1045px;top:436.10px;font-size:14px;line-height:16.1px;color:#2222cc;font-weight:700;font-family:'Liberation Sans',sans-serif;letter-spacing:0.45px;">0</div>
<div class="t" style="left:1111px;top:436.10px;font-size:14px;line-height:16.1px;color:#2222cc;font-weight:700;font-family:'Liberation Sans',sans-serif;letter-spacing:0.45px;">0</div>
<div class="t" style="left:1177px;top:436.10px;font-size:14px;line-height:16.1px;color:#2222cc;font-weight:700;font-family:'Liberation Sans',sans-serif;letter-spacing:0.45px;">0</div>
<div class="t" style="left:830px;top:460.10px;font-size:14px;line-height:16.1px;color:#222222;font-weight:700;font-family:'Liberation Sans',sans-serif;letter-spacing:0.45px;">Min(N)</div>
<div class="t" style="left:913px;top:460.10px;font-size:14px;line-height:16.1px;color:#2222cc;font-weight:700;font-family:'Liberation Sans',sans-serif;letter-spacing:0.45px;">0</div>
<div class="t" style="left:979px;top:460.10px;font-size:14px;line-height:16.1px;color:#2222cc;font-weight:700;font-family:'Liberation Sans',sans-serif;letter-spacing:0.45px;">0</div>
<div class="t" style="left:1045px;top:460.10px;font-size:14px;line-height:16.1px;color:#2222cc;font-weight:700;font-family:'Liberation Sans',sans-serif;letter-spacing:0.45px;">0</div>
<div class="t" style="left:1111px;top:460.10px;font-size:14px;line-height:16.1px;color:#2222cc;font-weight:700;font-family:'Liberation Sans',sans-serif;letter-spacing:0.45px;">0</div>
<div class="t" style="left:1177px;top:460.10px;font-size:14px;line-height:16.1px;color:#2222cc;font-weight:700;font-family:'Liberation Sans',sans-serif;letter-spacing:0.45px;">0</div>
<div class="t" style="left:830px;top:484.10px;font-size:14px;line-height:16.1px;color:#222222;font-weight:700;font-family:'Liberation Sans',sans-serif;letter-spacing:0.45px;">Avg(N)</div>
<div class="t" style="left:913px;top:484.10px;font-size:14px;line-height:16.1px;color:#2222cc;font-weight:700;font-family:'Liberation Sans',sans-serif;letter-spacing:0.45px;">0</div>
<div class="t" style="left:979px;top:484.10px;font-size:14px;line-height:16.1px;color:#2222cc;font-weight:700;font-family:'Liberation Sans',sans-serif;letter-spacing:0.45px;">0</div>
<div class="t" style="left:1045px;top:484.10px;font-size:14px;line-height:16.1px;color:#2222cc;font-weight:700;font-family:'Liberation Sans',sans-serif;letter-spacing:0.45px;">0</div>
<div class="t" style="left:1111px;top:484.10px;font-size:14px;line-height:16.1px;color:#2222cc;font-weight:700;font-family:'Liberation Sans',sans-serif;letter-spacing:0.45px;">0</div>
<div class="t" style="left:1177px;top:484.10px;font-size:14px;line-height:16.1px;color:#2222cc;font-weight:700;font-family:'Liberation Sans',sans-serif;letter-spacing:0.45px;">0</div>
<div class="t" style="left:830px;top:508.10px;font-size:14px;line-height:16.1px;color:#222222;font-weight:700;font-family:'Liberation Sans',sans-serif;letter-spacing:0.45px;">Max(mm)</div>
<div class="t" style="left:913px;top:508.10px;font-size:14px;line-height:16.1px;color:#2222cc;font-weight:700;font-family:'Liberation Sans',sans-serif;letter-spacing:0.45px;">0</div>
<div class="t" style="left:979px;top:508.10px;font-size:14px;line-height:16.1px;color:#2222cc;font-weight:700;font-family:'Liberation Sans',sans-serif;letter-spacing:0.45px;">0</div>
<div class="t" style="left:1045px;top:508.10px;font-size:14px;line-height:16.1px;color:#2222cc;font-weight:700;font-family:'Liberation Sans',sans-serif;letter-spacing:0.45px;">0</div>
<div class="t" style="left:1111px;top:508.10px;font-size:14px;line-height:16.1px;color:#2222cc;font-weight:700;font-family:'Liberation Sans',sans-serif;letter-spacing:0.45px;">0</div>
<div class="t" style="left:1177px;top:508.10px;font-size:14px;line-height:16.1px;color:#2222cc;font-weight:700;font-family:'Liberation Sans',sans-serif;letter-spacing:0.45px;">0</div>
<div class="t" style="left:830px;top:532.10px;font-size:14px;line-height:16.1px;color:#222222;font-weight:700;font-family:'Liberation Sans',sans-serif;letter-spacing:0.45px;">Min(mm)</div>
<div class="t" style="left:913px;top:532.10px;font-size:14px;line-height:16.1px;color:#2222cc;font-weight:700;font-family:'Liberation Sans',sans-serif;letter-spacing:0.45px;">0</div>
<div class="t" style="left:979px;top:532.10px;font-size:14px;line-height:16.1px;color:#2222cc;font-weight:700;font-family:'Liberation Sans',sans-serif;letter-spacing:0.45px;">0</div>
<div class="t" style="left:1045px;top:532.10px;font-size:14px;line-height:16.1px;color:#2222cc;font-weight:700;font-family:'Liberation Sans',sans-serif;letter-spacing:0.45px;">0</div>
<div class="t" style="left:1111px;top:532.10px;font-size:14px;line-height:16.1px;color:#2222cc;font-weight:700;font-family:'Liberation Sans',sans-serif;letter-spacing:0.45px;">0</div>
<div class="t" style="left:1177px;top:532.10px;font-size:14px;line-height:16.1px;color:#2222cc;font-weight:700;font-family:'Liberation Sans',sans-serif;letter-spacing:0.45px;">0</div>
<div class="t" style="left:830px;top:556.10px;font-size:14px;line-height:16.1px;color:#222222;font-weight:700;font-family:'Liberation Sans',sans-serif;letter-spacing:0.45px;">Avg(mm)</div>
<div class="t" style="left:913px;top:556.10px;font-size:14px;line-height:16.1px;color:#2222cc;font-weight:700;font-family:'Liberation Sans',sans-serif;letter-spacing:0.45px;">0</div>
<div class="t" style="left:979px;top:556.10px;font-size:14px;line-height:16.1px;color:#2222cc;font-weight:700;font-family:'Liberation Sans',sans-serif;letter-spacing:0.45px;">0</div>
<div class="t" style="left:1045px;top:556.10px;font-size:14px;line-height:16.1px;color:#2222cc;font-weight:700;font-family:'Liberation Sans',sans-serif;letter-spacing:0.45px;">0</div>
<div class="t" style="left:1111px;top:556.10px;font-size:14px;line-height:16.1px;color:#2222cc;font-weight:700;font-family:'Liberation Sans',sans-serif;letter-spacing:0.45px;">0</div>
<div class="t" style="left:1177px;top:556.10px;font-size:14px;line-height:16.1px;color:#2222cc;font-weight:700;font-family:'Liberation Sans',sans-serif;letter-spacing:0.45px;">0</div>
<div class="b btn" style="left:825px;top:592.5px;width:93px;height:25.0px;"></div>
<div class="t" style="left:823.5px;top:596.18px;width:93px;text-align:center;font-size:15px;line-height:17.25px;color:#222222"><span style="display:inline-block;transform:scaleX(0.9)">Load</span></div>
<div class="b btn" style="left:946px;top:592.5px;width:93px;height:25.0px;"></div>
<div class="t" style="left:944.5px;top:596.18px;width:93px;text-align:center;font-size:15px;line-height:17.25px;color:#222222"><span style="display:inline-block;transform:scaleX(0.9)">Calculate</span></div>
<div class="b btn" style="left:1047px;top:592.5px;width:93px;height:25.0px;"></div>
<div class="t" style="left:1045.5px;top:596.18px;width:93px;text-align:center;font-size:15px;line-height:17.25px;color:#222222"><span style="display:inline-block;transform:scaleX(0.9)">Save</span></div>
<div class="b btn" style="left:1148px;top:592.5px;width:93px;height:25.0px;"></div>
<div class="t" style="left:1146.5px;top:596.18px;width:93px;text-align:center;font-size:15px;line-height:17.25px;color:#222222"><span style="display:inline-block;transform:scaleX(0.9)">Export</span></div>
<svg class="b" style="left:13px;top:643px" width="30" height="29"><defs><linearGradient id="rg" x1="0" y1="0" x2="0.6" y2="1"><stop offset="0" stop-color="#b4b4b2"/><stop offset="1" stop-color="#6a6a68"/></linearGradient></defs><circle cx="15" cy="14.3" r="13.6" fill="url(#rg)"/><circle cx="15" cy="14.3" r="11" fill="#485a2e"/></svg>
<div class="t" style="left:60px;top:651.68px;font-size:15px;line-height:17.25px;color:#3535c8;font-weight:400;font-family:'Liberation Sans',sans-serif;transform:scaleX(0.87);transform-origin:0 0;">Status</div>
<div class="t" style="left:826px;top:651.68px;font-size:15px;line-height:17.25px;color:#222222;font-weight:400;font-family:'Liberation Sans',sans-serif;transform:scaleX(0.9);transform-origin:0 0;">Date:</div>
<div class="t" style="left:863px;top:651.68px;font-size:15px;line-height:17.25px;color:#3535c8;font-weight:400;font-family:'Liberation Sans',sans-serif;transform:scaleX(0.83);transform-origin:0 0;">17-09-2022</div>
<div class="t" style="left:992px;top:651.68px;font-size:15px;line-height:17.25px;color:#222222;font-weight:400;font-family:'Liberation Sans',sans-serif;transform:scaleX(0.9);transform-origin:0 0;">Time:</div>
<div class="t" style="left:1030px;top:651.68px;font-size:15px;line-height:17.25px;color:#3535c8;font-weight:400;font-family:'Liberation Sans',sans-serif;transform:scaleX(0.84);transform-origin:0 0;">11:01 PM</div>
<div class="b btn" style="left:1169px;top:647px;width:93px;height:24px;"></div>
<div class="t" style="left:1167.5px;top:649.48px;width:93px;text-align:center;font-size:15px;line-height:17.25px;color:#222222"><span style="display:inline-block;transform:scaleX(0.9)">Exit</span></div>
<div class="b" style="left:0;top:680px;width:1280px;height:40px;background:linear-gradient(90deg,#d4d3d1 0%,#d6d4d0 31%,#dedad2 36%,#e3ded4 42%,#e6dfd4 47%,#e6ddd2 52%,#e9ded3 56%,#e6ddd2 58%,#dcd8d2 62%,#e5e1d8 65%,#dedbd6 70%,#d6d5d3 75%,#d3d3d3 100%)"></div>
<div class="b" style="left:0px;top:680px;width:49px;height:40px;background:#d2d2d2"></div>
<svg class="b" style="left:15px;top:691px" width="18" height="18"><path d="M0.6 2.6 L6.9 1.7 V8.1 H0.6Z M8 1.5 L17 0.3 V8.1 H8Z M0.6 9.2 H6.9 V15.7 L0.6 14.8Z M8 9.2 H17 V16.9 L8 15.8Z" fill="#000"/></svg>
<div class="b" style="left:49px;top:681px;width:342px;height:39px;background:#fff"></div>
<svg class="b" style="left:58px;top:690px" width="20" height="20"><circle cx="12.3" cy="7.5" r="5.2" fill="none" stroke="#1a1a1a" stroke-width="1.25"/><path d="M8.6 11.2 L2.3 17.5" stroke="#1a1a1a" stroke-width="1.3"/></svg>
<div class="t" style="left:88px;top:692.68px;font-size:15px;line-height:17.25px;color:#3a3a3a;font-weight:400;font-family:'Liberation Sans',sans-serif;transform:scaleX(0.99);transform-origin:0 0;">Type here to search</div>
<svg class="b" style="left:405px;top:689px" width="22" height="22"><circle cx="11" cy="10.8" r="6.7" fill="none" stroke="#111" stroke-width="1.9"/></svg>
<svg class="b" style="left:453px;top:688px" width="22" height="24"><path d="M3.5 3.8 V6.2 H14 V3.8" fill="none" stroke="#333" stroke-width="1.1"/><path d="M3.5 19.5 V8.7 H14 V19.5" fill="none" stroke="#333" stroke-width="1.1"/><rect x="3.5" y="14.6" width="10.5" height="2.9" fill="#999"/><path d="M18 4 V19.5" stroke="#999" stroke-width="1.3"/><circle cx="18" cy="9.8" r="1" fill="#111"/></svg>
<svg class="b" style="left:503.2px;top:687.7px" width="24" height="24"><path d="M12 12 L2.47 6.5 A11 11 0 0 1 21.53 6.5 Z" fill="#e0382b"/><path d="M12 12 L21.53 6.5 A11 11 0 0 1 13.9 22.83 Z" fill="#f8c21c"/><path d="M12 12 L13.9 22.83 A11 11 0 0 1 2.47 6.5 Z" fill="#1a9a45"/><circle cx="12" cy="12" r="5.4" fill="#f4f4f4"/><circle cx="12" cy="12" r="4.3" fill="#3b7fe6"/></svg>
<svg class="b" style="left:550px;top:686px" width="42" height="34"><rect x="4.8" y="3.7" width="21" height="15.5" fill="#1a80d6"/><rect x="3.5" y="18.5" width="5" height="1.5" fill="#0d5fb0"/><rect x="8" y="5.8" width="10.6" height="7" fill="#3ec6f2"/><rect x="8" y="12.8" width="10.6" height="5" fill="#27a4ea"/><rect x="8" y="17.8" width="10.6" height="6" fill="#0f6ccc"/><circle cx="27.7" cy="21.3" r="9.6" fill="#dddbd8" stroke="#6a6a6a" stroke-width="1"/></svg>
<div class="t" style="left:571px;top:699.06px;font-size:13.5px;line-height:15.52px;color:#111;font-weight:700;font-family:'Liberation Sans',sans-serif;transform:scaleX(0.9);transform-origin:0 0;">26</div>
<svg class="b" style="left:603px;top:688px" width="26" height="24"><path d="M0.4 7 L12.3 0.3 L24.3 7 V22.5 H0.4Z" fill="#0f62b8"/><path d="M0.4 7 H24.3 V22.5 H0.4Z" fill="#2aa4e8"/><path d="M0.4 8 L24.3 22.5 H0.4Z" fill="#1a88d8"/><path d="M2.5 7.2 H22.3 L12.3 14.2Z" fill="#f2f6fa"/></svg>
<div class="b" style="left:641px;top:680px;width:49px;height:38px;background:#f2eee9"></div>
<div class="b" style="left:641px;top:718px;width:49px;height:2px;background:#3d3d3d"></div>
<svg class="b" style="left:654px;top:688.5px" width="23" height="23"><defs><linearGradient id="gg" x1="1" y1="0" x2="0" y2="1"><stop offset="0" stop-color="#b2e84a"/><stop offset="0.45" stop-color="#92cc38"/><stop offset="1" stop-color="#7fb432"/></linearGradient></defs><rect x="0" y="0" width="22.8" height="22.8" rx="3.5" fill="url(#gg)"/><path d="M11.4 19 V4.5 M11.4 14 L8 11 V8.5 M11.4 12 L14.3 9.5 V6.5" stroke="#e8f8d0" stroke-width="1.1" fill="none"/><circle cx="11.4" cy="18.5" r="1.4" fill="#e8f8d0"/></svg>
<div class="b" style="left:695px;top:718px;width:41px;height:2px;background:#3d3d3d"></div>
<svg class="b" style="left:704px;top:691px" width="22" height="18"><rect x="0" y="0" width="10" height="4" rx="1.5" fill="#dca51e"/><rect x="0" y="2.5" width="21.8" height="15" fill="#f9d060"/><path d="M3.6 17.6 V9 H17.6 V17.6 H14 V12.5 H7.2 V17.6Z" fill="#2f8fd8"/></svg>
<svg class="b" style="left:995px;top:686px" width="120" height="28"><path d="M5.4 16.9 L11.6 10 L17.8 16.9" fill="none" stroke="#2a2a2a" stroke-width="1.1"/><path d="M29 19.5 Q27 19.5 27 17 Q27 14 30.5 13.8 Q31.5 8.5 36 8.5 Q39.5 8.5 41 11.5 Q44 11.7 44 15.5 Q44 19.5 40.5 19.5Z" fill="#b8b8b8" stroke="#2a2a2a" stroke-width="1.1"/><path d="M27.6 17.5 Q30 14.5 35 14 Q40 14 43.5 17" fill="none" stroke="#d6d6d6" stroke-width="2"/><rect x="53.5" y="10" width="14" height="8.5" fill="#000"/><rect x="67.5" y="12.5" width="1.3" height="3.5" fill="#333"/><path d="M52 8 V11 M55 8 V11 M51 11 H56 V13.5 Q53.5 15 53.5 17 V19" fill="none" stroke="#2a2a2a" stroke-width="1"/><path d="M78.5 20.5 A13 13 0 0 1 91 8 M81.5 20.5 A10 10 0 0 1 91 11 M84.5 20.5 A7 7 0 0 1 91 14" fill="none" stroke="#555" stroke-width="1"/><circle cx="89.6" cy="19.7" r="1.1" fill="#111"/><path d="M100.5 12 H103.5 L107.5 8.5 V19.8 L103.5 16.5 H100.5Z" fill="none" stroke="#2a2a2a" stroke-width="1"/><path d="M109.5 12 Q111 14.2 109.5 16.3 M111.5 10 Q114.3 14.2 111.5 18.3 M113.5 8.2 Q117.6 14.2 113.5 20" fill="none" stroke="#2a2a2a" stroke-width="1"/></svg>
<div class="t" style="left:1121.5px;top:693.48px;font-size:12.5px;line-height:14.37px;color:#262626;font-weight:400;font-family:'Liberation Sans',sans-serif;transform:scaleX(0.85);transform-origin:0 0;">ENG</div>
<div class="t" style="left:1174px;top:683.98px;font-size:12.5px;line-height:14.37px;color:#262626;font-weight:400;font-family:'Liberation Sans',sans-serif;transform:scaleX(0.88);transform-origin:0 0;">23:01</div>
<div class="t" style="left:1158px;top:702.48px;font-size:12.5px;line-height:14.37px;color:#262626;font-weight:400;font-family:'Liberation Sans',sans-serif;transform:scaleX(0.93);transform-origin:0 0;">17-09-2022</div>
<svg class="b" style="left:1237px;top:690px" width="22" height="22"><path d="M2.5 2.5 H17.8 V13.5 H10 L7 16.8 V13.5 H2.5Z" fill="none" stroke="#222" stroke-width="1.1"/></svg>
<div class="b" style="left:1274px;top:680px;width:1px;height:40px;background:#bdbdbd"></div>
</body></html>
